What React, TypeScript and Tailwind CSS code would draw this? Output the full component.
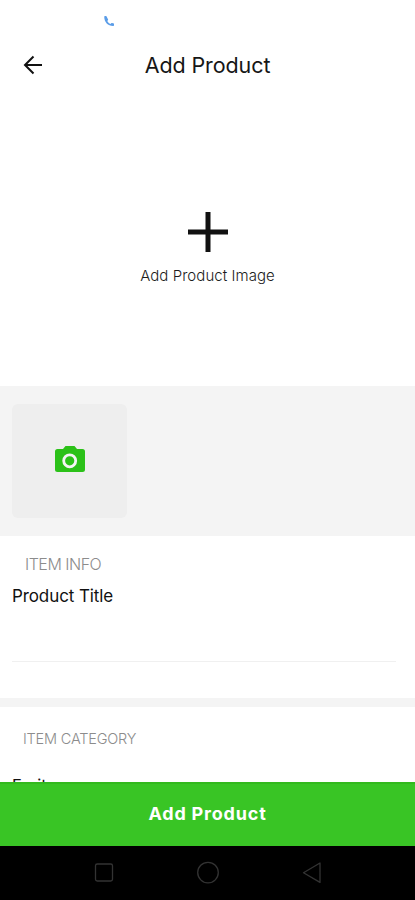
const STROKE = "#333333";

function StatusBar() {
  return (
    <div className="flex h-10 shrink-0 items-start pl-[103px] pt-[15px]">
      <svg width="12" height="12" viewBox="0 0 24 24" fill="#5b9de8">
        <path d="M7.500 3.500C7.300 2.500 6.800 2 5.800 2H4.500C3 2 2.500 3 2.500 4c0 10 7.500 18 17.500 18 1.500 0 2-.6 2-1.500v-2.500c0-1-.5-1.500-1.500-1.700l-2.500-.3c-1 0-1.500.2-2 .8l-1.500 1.400c-2.700-1.400-4.600-3.400-6-6l1.300-1.600c.4-.5.5-1 .4-1.600z" />
      </svg>
    </div>
  );
}

function Header() {
  return (
    <header className="grid h-[50px] shrink-0 grid-cols-[56px_1fr_56px] items-center">
      <button aria-label="Back" className="pl-[23px]">
        <svg width="20" height="20" viewBox="0 0 20 20" fill="none" stroke="#111" strokeWidth="2">
          <path d="M19 10H2M10.500 1.500 2 10l8.500 8.500" />
        </svg>
      </button>
      <h1 className="text-center text-[21.5px] font-normal tracking-[-0.1px] text-[#161616]">Add Product</h1>
    </header>
  );
}

function ImagePicker() {
  return (
    <section className="flex h-[296px] shrink-0 flex-col items-center pt-[121px]">
      <svg width="42" height="42" viewBox="0 0 42 42" stroke="#111" strokeWidth="5">
        <path d="M21 1v40M1 21h40" />
      </svg>
      <p className="mt-[13px] text-[15px] font-light leading-5 tracking-[0.06px] text-[#1c1c1c]">Add Product Image</p>
    </section>
  );
}

function Thumbnails() {
  return (
    <section className="flex h-[150px] shrink-0 bg-[#f4f4f4] pl-3 pt-[18px]">
      <div className="flex h-[114px] w-[115px] items-center justify-center rounded-[6px] bg-[#eeeeee]">
        <svg width="30" height="27" viewBox="0 0 30 27" className="mb-[3px]">
          <path
            fill="#2bc118"
            d="M10.500 0h9l2.500 3H27.500a2.500 2.500 0 0 1 2.500 2.500v18a2.500 2.500 0 0 1-2.500 2.500h-25A2.500 2.500 0 0 1 0 23.500v-18A2.500 2.500 0 0 1 2.500 3H8z"
          />
          <circle cx="14.700" cy="14.800" r="6" fill="none" stroke="#f4f4f4" strokeWidth="2.800" />
        </svg>
      </div>
    </section>
  );
}

function ItemInfo() {
  return (
    <section className="flex h-[162px] shrink-0 flex-col px-3 pt-[18px]">
      <h2 className="pl-[13px] text-[16px] font-light leading-5 tracking-[-0.5px] text-[#8c8c8c]">ITEM INFO</h2>
      <label className="mt-3 text-[17px] leading-5 tracking-[-0.1px] text-[#111]">Product Title</label>
      <div className="mt-[55px] mr-[7px] h-px bg-[#f0f0f0]" />
    </section>
  );
}

function ItemCategory() {
  return (
    <section className="min-h-0 flex-1 overflow-hidden border-t-[9px] border-[#f4f4f4] px-3 pt-[22px]">
      <h2 className="pl-[11px] text-[14.5px] font-light leading-5 tracking-[-0.2px] text-[#8c8c8c]">ITEM CATEGORY</h2>
      <p className="mt-[26px] text-[16.5px] leading-5 text-[#111]">Fruits</p>
    </section>
  );
}

function SystemNav() {
  return (
    <nav className="flex h-[54px] shrink-0 items-center justify-center gap-20 bg-black">
      <svg width="24" height="24" viewBox="0 0 24 24" fill="none" stroke={STROKE} strokeWidth="1.300">
        <rect x="3.500" y="3" width="17" height="17" rx="1.800" />
      </svg>
      <svg width="24" height="24" viewBox="0 0 24 24" fill="none" stroke={STROKE} strokeWidth="1.300">
        <circle cx="12" cy="11.600" r="10.300" />
      </svg>
      <svg width="24" height="24" viewBox="0 0 24 24" fill="none" stroke={STROKE} strokeWidth="1.300" strokeLinejoin="round">
        <path d="M20 2v19.400L3.500 11.700z" />
      </svg>
    </nav>
  );
}

export default function App() {
  return (
    <div className="flex h-screen w-full flex-col overflow-hidden bg-white font-['Inter',sans-serif]">
      <StatusBar />
      <Header />
      <ImagePicker />
      <Thumbnails />
      <ItemInfo />
      <ItemCategory />
      <button className="h-16 shrink-0 border-t-2 border-[#32b91d] bg-[#39c525] pb-[3px] text-[18px] font-bold tracking-[0.8px] text-white">
        Add Product
      </button>
      <SystemNav />
    </div>
  );
}
